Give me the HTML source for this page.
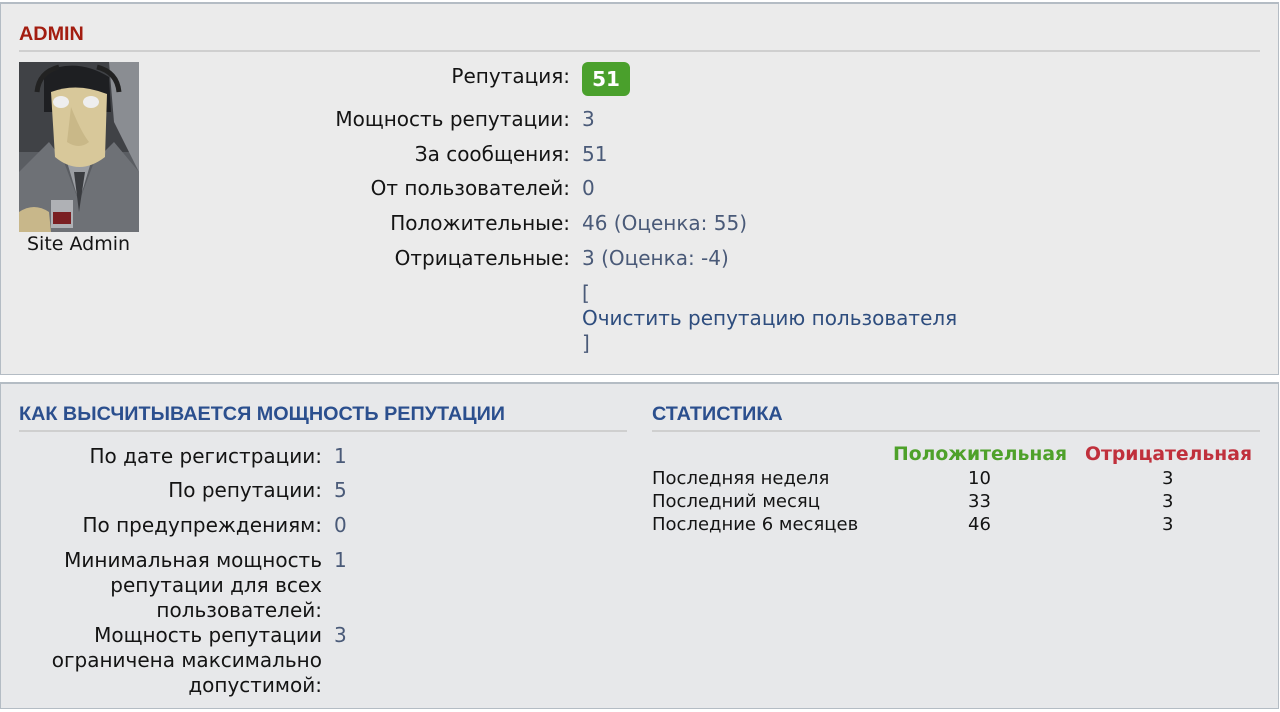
<!DOCTYPE html>
<html><head><meta charset="utf-8"><style>
body{margin:0;width:1280px;height:712px;background:#fff;position:relative;overflow:hidden;font-family:"DejaVu Sans","Liberation Sans",sans-serif;color:#141414}
.p{position:absolute;left:0;width:1277px;background:#ebebeb;border:1px solid #b4bcc4;border-top:2px solid #b4bcc4}
.a{position:absolute;white-space:nowrap;font-size:20px;line-height:25px}
.r{text-align:right}
.v{color:#4a5a78}
.h{position:absolute;font-family:"Liberation Sans",sans-serif;font-weight:bold;font-size:19.8px;line-height:20px;color:#2b4f8e}
.ln{position:absolute;height:2px;background:#cfcfcf}
.s{position:absolute;white-space:nowrap;font-size:18px;line-height:23px}
</style></head><body>
<div class="p" style="top:2px;height:370px"></div>
<div class="p" style="top:382px;height:324px;background:#e7e8ea"></div>

<div class="h" style="left:19px;top:24px;color:#a31d10">ADMIN</div>
<div class="ln" style="left:19px;top:50px;width:1241px"></div>
<svg style="position:absolute;left:19px;top:62px" width="120" height="170" viewBox="0 0 120 170">
<rect width="120" height="170" fill="#5a5d62"/>
<rect x="0" y="0" width="120" height="90" fill="#404246"/>
<path d="M90 0H120V110L95 60Z" fill="#8a8d92"/>
<path d="M0 170V110L30 80L45 100L60 140L75 100L95 80L120 110V170Z" fill="#6e7176"/>
<path d="M48 100L60 140L72 100Z" fill="#9a9da2"/>
<path d="M55 110L60 150L66 110Z" fill="#3a3c40"/>
<path d="M25 10Q58 -5 90 15L92 50L25 50Z" fill="#1e1f22"/>
<path d="M32 30Q58 20 88 32L86 95Q60 115 36 95Z" fill="#d8c89a"/>
<ellipse cx="42" cy="40" rx="8" ry="6" fill="#eee"/><ellipse cx="72" cy="40" rx="8" ry="6" fill="#eee"/>
<path d="M52 45Q62 70 70 80Q60 88 48 80Z" fill="#c9b888"/>
<path d="M18 30Q20 10 40 5M100 30Q98 10 78 5" stroke="#222" stroke-width="5" fill="none"/>
<rect x="32" y="138" width="22" height="28" fill="#bfc2c6" opacity=".8"/>
<rect x="34" y="150" width="18" height="12" fill="#7a1f22"/>
<path d="M0 150Q15 140 30 150L32 170H0Z" fill="#c8b78a"/>
</svg>
<div class="a" style="left:27px;top:232px;font-size:19px">Site Admin</div>

<div class="a r" style="right:710px;top:64px">Репутация:</div>
<div style="position:absolute;left:582px;top:62px;width:48px;height:34px;background:#4aa02c;border-radius:6px;color:#fff;font-weight:bold;font-size:20px;line-height:34px;text-align:center">51</div>
<div class="a r" style="right:710px;top:107px">Мощность репутации:</div><div class="a v" style="left:582px;top:107px">3</div>
<div class="a r" style="right:710px;top:142px">За сообщения:</div><div class="a v" style="left:582px;top:142px">51</div>
<div class="a r" style="right:710px;top:176px">От пользователей:</div><div class="a v" style="left:582px;top:176px">0</div>
<div class="a r" style="right:710px;top:211px">Положительные:</div><div class="a v" style="left:582px;top:211px">46 (Оценка: 55)</div>
<div class="a r" style="right:710px;top:246px">Отрицательные:</div><div class="a v" style="left:582px;top:246px">3 (Оценка: -4)</div>
<div class="a v" style="left:582px;top:281px">[</div>
<div class="a" style="left:582px;top:306px;color:#2e4d7e">Очистить репутацию пользователя</div>
<div class="a v" style="left:582px;top:331px">]</div>

<div class="h" style="left:19px;top:404px">КАК ВЫСЧИТЫВАЕТСЯ МОЩНОСТЬ РЕПУТАЦИИ</div>
<div class="ln" style="left:19px;top:430px;width:608px"></div>
<div class="a r" style="right:958px;top:444px">По дате регистрации:</div><div class="a v" style="left:334px;top:444px">1</div>
<div class="a r" style="right:958px;top:478px">По репутации:</div><div class="a v" style="left:334px;top:478px">5</div>
<div class="a r" style="right:958px;top:513px">По предупреждениям:</div><div class="a v" style="left:334px;top:513px">0</div>
<div class="a r" style="right:958px;top:548px">Минимальная мощность<br>репутации для всех<br>пользователей:</div><div class="a v" style="left:334px;top:548px">1</div>
<div class="a r" style="right:958px;top:623px">Мощность репутации<br>ограничена максимально<br>допустимой:</div><div class="a v" style="left:334px;top:623px">3</div>

<div class="h" style="left:652px;top:404px">СТАТИСТИКА</div>
<div class="ln" style="left:652px;top:430px;width:608px"></div>
<div class="s" style="left:893px;top:443px;font-weight:bold;color:#4ea12a;font-size:18.8px">Положительная</div>
<div class="s" style="left:1085px;top:443px;font-weight:bold;color:#c0303c;font-size:18.8px">Отрицательная</div>
<div class="s" style="left:652px;top:467px">Последняя неделя</div><div class="s" style="left:968px;top:467px">10</div><div class="s" style="left:1162px;top:467px">3</div>
<div class="s" style="left:652px;top:490px">Последний месяц</div><div class="s" style="left:968px;top:490px">33</div><div class="s" style="left:1162px;top:490px">3</div>
<div class="s" style="left:652px;top:513px">Последние 6 месяцев</div><div class="s" style="left:968px;top:513px">46</div><div class="s" style="left:1162px;top:513px">3</div>
</body></html>
